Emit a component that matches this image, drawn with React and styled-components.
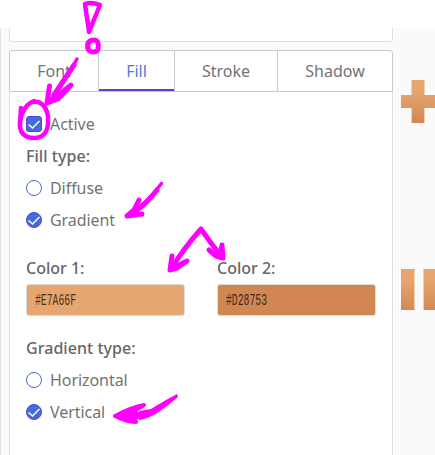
import React from "react";
import styled, { createGlobalStyle } from "styled-components";

const GlobalStyle = createGlobalStyle`
  * { box-sizing: border-box; }
  body { margin: 0; background: #fff; overflow: hidden; }
`;

const Page = styled.div`
  position: relative;
  width: 435px;
  height: 455px;
  padding-top: 28px;
  overflow: hidden;
  background: #fff;
  color: #737373;
  font: 16px/24px "Noto Sans", sans-serif;
`;

const Workspace = styled.div`
  display: flex;
  height: 427px;
  padding-left: 8px;
  background: #fafafa;
  border-left: 1px solid #e2e2e2;
`;

const Sidebar = styled.div`
  display: flex;
  flex-direction: column;
  width: 384px;
  flex: none;
`;

const PreviousCard = styled.div`
  height: 14px;
  flex: none;
  margin-bottom: 8px;
  background: #fff;
  border: 1px solid #dedfe0;
  border-top: 0;
  border-radius: 0 0 3px 3px;
`;

const TabBar = styled.div`
  display: grid;
  grid-template-columns: 89px 76px 103px 1fr;
  height: 42px;
  flex: none;
  background: #fff;
  border: 1px solid #c3cad0;
  border-radius: 3px 3px 0 0;
`;

const Tab = styled.button`
  margin: 0;
  padding: 0;
  border: 0;
  border-right: ${(p) => (p.$last ? 0 : 1)}px solid #c3cad0;
  background: linear-gradient(#5146d8, #5146d8) bottom / 100% ${(p) => (p.$active ? 2 : 0)}px no-repeat;
  color: ${(p) => (p.$active ? "#5577dd" : "#737373")};
  font: inherit;
`;

const Panel = styled.div`
  flex: 1;
  padding: 20px 16px 0;
  background: #fff;
  border: solid #dedfe0;
  border-width: 0 1px;
`;

const Option = styled.div`
  display: flex;
  align-items: center;
  gap: 8px;
  height: 24px;
  margin-bottom: 8px;
  letter-spacing: -0.06px;
`;

const Mark = styled.span`
  display: flex;
  width: 16px;
  height: 16px;
  border: 1px solid ${(p) => (p.$checked ? "#5146d8" : "#446bdc")};
  border-radius: ${(p) => (p.$square ? "3px" : "50%")};
  background: ${(p) => (p.$checked ? "#446bdc" : "#fff")};
`;

const Heading = styled.div`
  height: 24px;
  margin-bottom: 8px;
  font-weight: 500;
  letter-spacing: 0.05px;
  color: #666;
`;

const Colors = styled.div`
  display: grid;
  grid-template-columns: 159px 159px;
  column-gap: 32px;
  margin: 24px 0 20px;
`;

const ColorLabel = styled.div`
  height: 28px;
  font-weight: 500;
  color: #666;
`;

const Swatch = styled.div`
  display: flex;
  align-items: center;
  height: 32px;
  padding: 2px 8px 0;
  border: 1px solid #d9dbdd;
  border-radius: 3px;
  background: ${(p) => p.$color};
  color: ${(p) => p.$ink};
`;

const HexValue = styled.span`
  font: 16px/28px "Liberation Mono", monospace;
  transform: scaleX(0.61);
  transform-origin: left;
`;

const Preview = styled.div`
  display: flex;
  flex-direction: column;
  gap: 146px;
  padding: 52px 0 0 8px;
`;

const Glyph = styled.svg`
  display: block;
  flex: none;
`;

const Annotations = styled.svg`
  position: absolute;
  inset: 0;
  pointer-events: none;
`;

function Choice({ label, checked, square }) {
  return (
    <Option>
      <Mark $checked={checked} $square={square}>
        {checked && (
          <svg width="14" height="14" viewBox="0 0 14 14" fill="none">
            <path d="M1.5 7.5 5.5 11 12.5 4" stroke="#fff" strokeWidth="1.5" />
          </svg>
        )}
      </Mark>
      <span>{label}</span>
    </Option>
  );
}

function ColorField({ label, color, ink }) {
  return (
    <div>
      <ColorLabel>{label}</ColorLabel>
      <Swatch $color={color} $ink={ink}>
        <HexValue>{color}</HexValue>
      </Swatch>
    </div>
  );
}

export default function App() {
  return (
    <Page>
      <GlobalStyle />
      <Workspace>
        <Sidebar>
          <PreviousCard />
          <TabBar>
            <Tab>Font</Tab>
            <Tab $active>Fill</Tab>
            <Tab>Stroke</Tab>
            <Tab $last>Shadow</Tab>
          </TabBar>
          <Panel>
            <Choice label="Active" checked square />
            <Heading>Fill type:</Heading>
            <Choice label="Diffuse" />
            <Choice label="Gradient" checked />
            <Colors>
              <ColorField label="Color 1:" color="#E7A66F" ink="#48321f" />
              <ColorField label="Color 2:" color="#D28753" ink="#422817" />
            </Colors>
            <Heading>Gradient type:</Heading>
            <Choice label="Horizontal" />
            <Choice label="Vertical" checked />
          </Panel>
        </Sidebar>
        <Preview>
          <Glyph width="34" height="43">
            <defs>
              <linearGradient id="copper" gradientUnits="userSpaceOnUse" x1="0" y1="0" x2="0" y2="43">
                <stop offset="0.25" stopColor="#e7a66f" />
                <stop offset="1" stopColor="#d28753" />
              </linearGradient>
            </defs>
            <path d="M10 0h14v43H10z" fill="#f1ceb0" />
            <path d="M11 0h12v15h11v13H23v15H11V28H0V15h11z" fill="url(#copper)" />
          </Glyph>
          <Glyph width="34" height="41">
            <path d="M0 0h14v41H0zM22 0h12v41H22z" fill="#f1ceb0" />
            <path d="M0 0h13v41H0zM23 0h11v41H23z" fill="url(#copper)" />
          </Glyph>
        </Preview>
      </Workspace>
      <Annotations width="435" height="455" fill="none" stroke="#ff00ff" strokeWidth="4" strokeLinecap="round" strokeLinejoin="round">
        <path d="M85 4C90 2 95 3 100 5L89 32C88 22 86 13 85 4" strokeWidth="4.5" />
        <path d="M90 41C88 43 87 46 88 49C90 53 97 53 98 49C99 44 98 40 94 40Q90 40 88 43" strokeWidth="5" />
        <path d="M34 101C26 104 21 113 20 122C19 132 24 138 34 138C43 138 48 132 48 122C49 108 41 100 33 102M21 108 20 125" strokeWidth="4.5" />
        <path d="M77 59Q64 83 48 103" strokeWidth="3.500" />
        <path d="M74 65 54 95" strokeWidth="5" />
        <path d="M49.500 86 47 103 58 99 71 85 60 94 48 102" strokeWidth="5" />
        <path d="M161.500 183.500Q147 203 128 216" strokeWidth="3.500" />
        <path d="M157 190Q147 203 136 211" strokeWidth="5" />
        <path d="M139 200 134 210 127 216 142 214 131 214" strokeWidth="5" />
        <path d="M171 269C181 253 192 239 201 229L211 243 222 257" strokeWidth="5" />
        <path d="M172 256 170 270 177 268 187 261 175 267" strokeWidth="5" />
        <path d="M209 250 216 256 223 258 222 245 220 256" strokeWidth="5" />
        <path fill="#ff00ff" stroke="none" d="M177 394Q162 402 151 409L139 411V420Q151 418 160 411Q169 405 178 397Z" />
        <path fill="#ff00ff" d="M144 405Q132 407 115 416Q127 422 136 422L134 418 140 416 134 411Z" strokeWidth="4" />
      </Annotations>
    </Page>
  );
}
